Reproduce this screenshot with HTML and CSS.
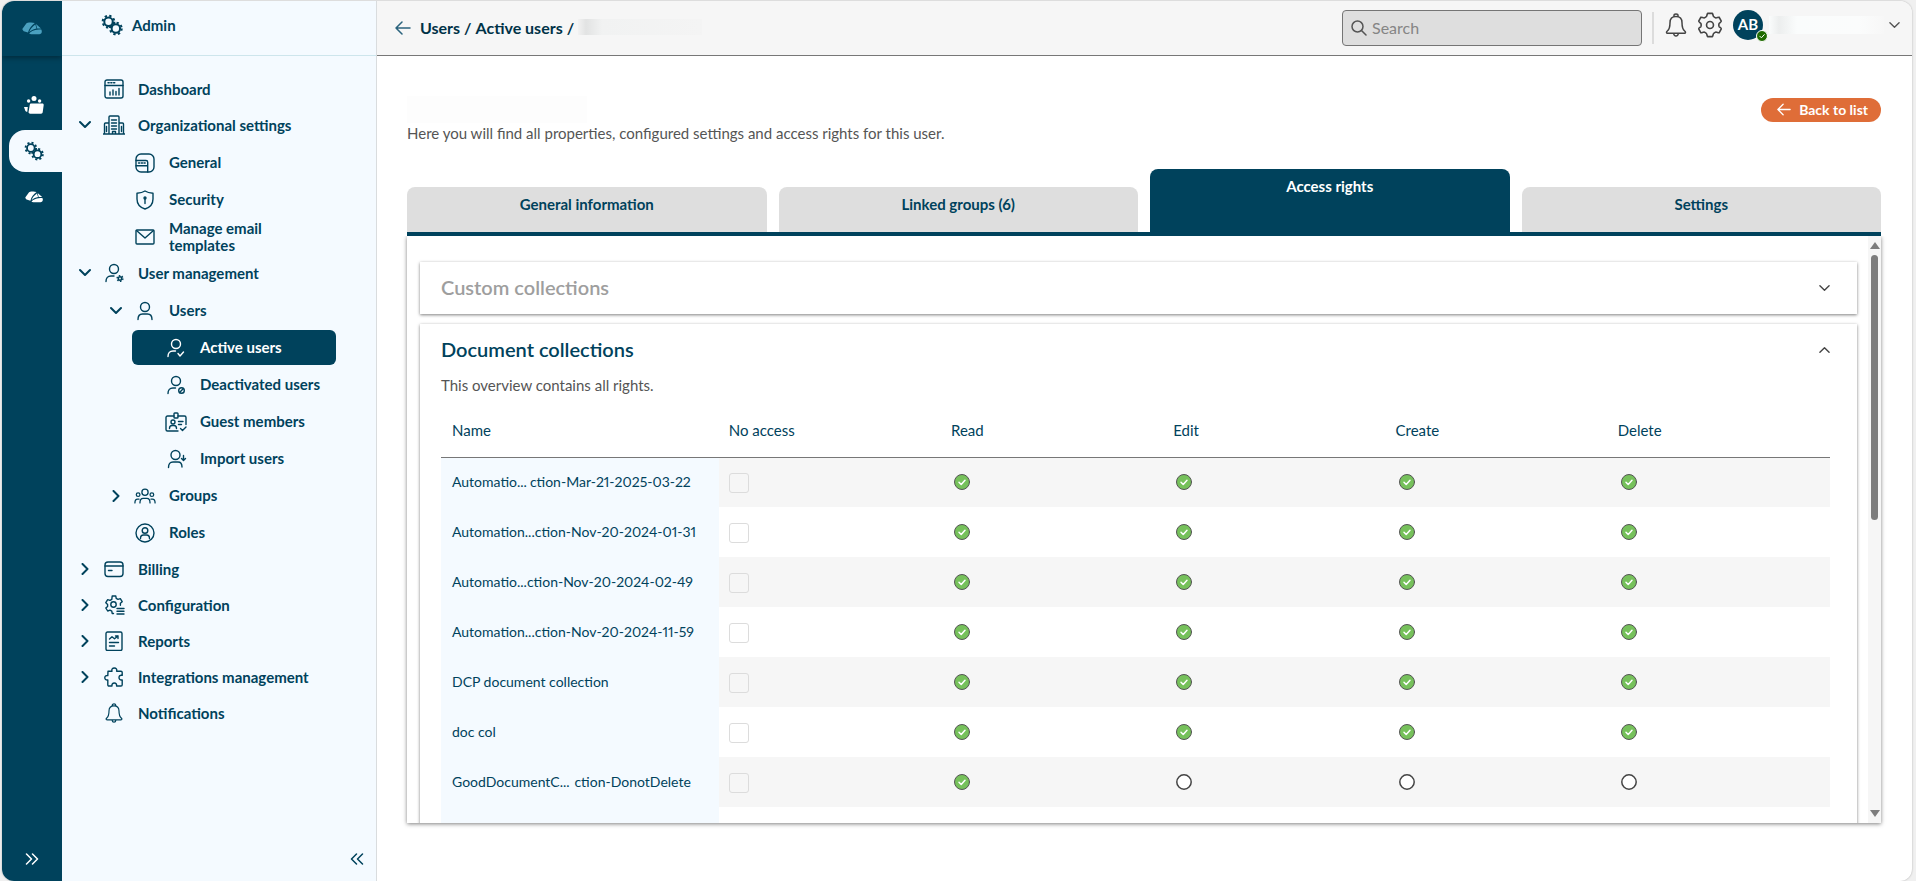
FILE: index.html
```html
<!DOCTYPE html>
<html lang="en">
<head>
  <meta charset="UTF-8">
  <meta name="viewport" content="width=device-width, initial-scale=1.0">
  <title>Admin - Active users</title>
  <link rel="stylesheet" href="styles.css">
</head>
<body>

<!-- icon sprite -->
<svg class="sprite" aria-hidden="true">
  <symbol id="logo" viewBox="0 0 20 13">
    <path d="M.3 7L4.300 1.500C5.200.6 7 .4 9 .5l3.800.5C9.500 3.400 7 6.500 6 10.600l-3.400-1C1.400 9.100.6 8.200.3 7z"/>
    <path d="M7.300 10C8.300 7.200 10.300 4.700 13.300 2.600l1.200 4C12 7 9.300 8.200 7.300 10z"/>
    <path d="M14 2.100l5 4.500-3.800-.1z"/>
    <path d="M7.200 11.500c2.400-2.600 5.700-3.800 12.100-3.900.6.900.7 1.900.4 2.900-.4 1.200-1.300 1.700-2.400 1.700H9.300c-.9 0-1.700-.2-2.100-.7z"/>
  </symbol>
  <symbol id="gears" viewBox="0 0 24 24">
    <g fill="none" stroke="currentColor">
      <circle cx="8.200" cy="8.400" r="4.600" stroke-width="2.200"/>
      <circle cx="8.200" cy="8.400" r="6.400" stroke-width="2.200" stroke-dasharray="2.500 2.530"/>
      <circle cx="16.200" cy="15.800" r="4.600" stroke-width="2.200"/>
      <circle cx="16.200" cy="15.800" r="6.400" stroke-width="2.200" stroke-dasharray="2.500 2.530"/>
    </g>
  </symbol>
  <symbol id="team" viewBox="0 0 20 18">
    <g fill="currentColor">
      <circle cx="10" cy="2.600" r="2.500"/><circle cx="4.600" cy="5" r="1.700"/><circle cx="15.600" cy="5" r="1.700"/>
      <path d="M5.800 8.700c.1-.8.700-1.200 1.500-1.200h11c1 0 1.500.6 1.400 1.500l-1 7.300c-.1.900-.7 1.400-1.600 1.400H6.200c-1 0-1.600-.5-1.700-1.400z"/>
      <path d="M0 11h3.800l-.5 4.800c-1.400 0-2-.6-2.200-1.500z"/>
    </g>
  </symbol>
  <symbol id="down" viewBox="0 0 12 12"><path d="M1 3l5 5 5-5"/></symbol>
  <symbol id="up" viewBox="0 0 12 12"><path d="M1 8l5-5 5 5"/></symbol>
  <symbol id="right" viewBox="0 0 12 12"><path d="M3.500 1l5 5-5 5"/></symbol>
  <symbol id="dbl-right" viewBox="0 0 14 12"><path d="M1.500 1l5 5-5 5M7.500 1l5 5-5 5"/></symbol>
  <symbol id="dbl-left" viewBox="0 0 14 12"><path d="M6.500 1l-5 5 5 5M12.500 1l-5 5 5 5"/></symbol>
  <symbol id="arrow" viewBox="0 0 16 14"><path d="M7 1L1 7l6 6M1 7h14"/></symbol>
  <symbol id="search" viewBox="0 0 16 16"><circle cx="6.500" cy="6.500" r="5.500"/><path d="M10.500 10.500L15 15"/></symbol>
  <symbol id="bell" viewBox="0 0 22 24">
    <path d="M9 3.500V2.300C9 1.500 9.900 1 11 1s2 .5 2 1.300v1.200M11 3.500c-3.800 0-6 2.600-6 6.200 0 4.300-.7 6.700-2.700 8.300-1.200 1-1 2.300.3 2.300h16.800c1.300 0 1.500-1.300.3-2.300-2-1.600-2.700-4-2.700-8.300 0-3.600-2.200-6.200-6-6.200zM8.700 20.500c.2 1.700 1 2.500 2.300 2.500s2.100-.8 2.300-2.500"/>
  </symbol>
  <symbol id="gear" viewBox="0 0 24 24">
    <path d="M9.800 1.300h4.400c.4 0 .7 2.500 1.100 2.900.5.500 1.500 1.100 2.200 1.300.6.100 2.500-1 2.900-.700l2 3.700c.3.600-1.700 1.500-2 2.100-.3.700-.3 2.100 0 2.800.3.600 2.300 1.500 2 2.100l-2 3.700c-.4.300-2.300-.8-2.900-.7-.7.200-1.700.8-2.200 1.300-.4.400-.7 2.900-1.100 2.900H9.800c-.4 0-.7-2.500-1.100-2.900-.5-.5-1.500-1.100-2.200-1.300-.6-.1-2.500 1-2.900.7l-2-3.700c-.3-.6 1.700-1.500 2-2.100.3-.7.300-2.100 0-2.800-.3-.6-2.300-1.500-2-2.100l2-3.700c.4-.3 2.300.8 2.900.7.700-.2 1.700-.8 2.200-1.300.4-.4.700-2.900 1.100-2.900z"/>
    <circle cx="12" cy="12" r="3.200"/>
  </symbol>
  <symbol id="dashboard" viewBox="0 0 20 20">
    <rect x="1" y="1" width="18" height="18" rx="2"/><path d="M1 6.500h18M4 3.800h1.200M6.800 3.800H8M9.600 3.800h1.200M6 16v-3M9 16v-5M12 16v-3.500M15 16V9.500"/>
  </symbol>
  <symbol id="building" viewBox="0 0 22 20">
    <path d="M0 19h22M6 19V2c0-.6.400-1 1-1h8c.6 0 1 .4 1 1v17M1.500 19V9c0-.6.400-1 1-1H6M20.500 19V9c0-.6-.4-1-1-1H16M8.500 5h5M8.500 8h5M8.500 11h5M8.500 14h5M3.500 11.500v5M18.500 11.500v5M9.500 19v-2.500h3V19"/>
  </symbol>
  <symbol id="general" viewBox="0 0 20 20">
    <rect x="1" y="1" width="18" height="18" rx="5"/><path d="M1 7.500h10c1 0 1.700.7 1.700 1.700V19M1 12.800h11.500M3.500 10h1.200M6.300 10h1.200M9 10h1.200"/>
  </symbol>
  <symbol id="shield" viewBox="0 0 20 20">
    <path d="M10 1C7.800 2.400 5 3 2 3.200V9c0 5 3.200 8.500 8 10 4.800-1.500 8-5 8-10V3.200C15 3 12.200 2.400 10 1z"/><circle cx="10" cy="8" r="1"/><path d="M10 8.500v5"/>
  </symbol>
  <symbol id="mail" viewBox="0 0 20 20">
    <rect x="1" y="3" width="18" height="14" rx="1"/><path d="M1.500 3.500L10 11l8.500-7.500"/>
  </symbol>
  <symbol id="user" viewBox="0 0 20 20">
    <circle cx="10" cy="6" r="4.500"/><path d="M3 18.500c0-3.500 1.500-5.500 4.500-5.500h5c3 0 4.500 2 4.500 5.500"/>
  </symbol>
  <symbol id="user-gear" viewBox="0 0 20 20">
    <circle cx="10" cy="6" r="4.500"/><path d="M2 18.500c0-3.700 1.800-5.500 5-5.500h3"/>
    <circle cx="16" cy="15.500" r="1.700" stroke-width="1.600"/><circle cx="16" cy="15.500" r="2.900" stroke-dasharray="1.500 1.530" stroke-width="1.400" stroke-linecap="butt"/>
  </symbol>
  <symbol id="user-check" viewBox="0 0 20 20">
    <circle cx="10" cy="6" r="4.500"/><path d="M2 18.500c0-3.700 1.800-5.500 5-5.500h2.500M12 15.500l2 2.500 3.500-4"/>
  </symbol>
  <symbol id="user-block" viewBox="0 0 20 20">
    <circle cx="10" cy="6" r="4.500"/><path d="M2 18.500c0-3.700 1.800-5.500 5-5.500h2.500"/><circle cx="15.500" cy="15.500" r="2.800"/><path d="M13.600 17.400l3.800-3.800"/>
  </symbol>
  <symbol id="badge" viewBox="0 0 22 20">
    <path d="M9 4H2.500C1.700 4 1 4.700 1 5.500v12c0 .8.700 1.500 1.500 1.500H13M13 4h6.500c.8 0 1.500.7 1.500 1.500v7"/><rect x="9" y="1" width="4" height="5" rx=".8"/>
    <circle cx="8" cy="10" r="2"/><path d="M4.500 16.500c0-2 1-3 2.500-3h2c1.500 0 2.500 1 2.500 3M13.500 9.500h4.500M13.500 12.500h3M15.500 16.500l2 2 3.500-3.500"/>
  </symbol>
  <symbol id="user-import" viewBox="0 0 20 20">
    <circle cx="9.500" cy="6" r="4.500"/><path d="M2.500 18.500c0-3.700 1.500-5.500 4.500-5.500h5c2.500 0 4 1.800 4 5M17.500 6.500V11M15.500 9.500l2 2 2-2"/>
  </symbol>
  <symbol id="groups" viewBox="0 0 24 20">
    <circle cx="12" cy="6" r="3.400"/><path d="M6.500 17.500c0-3.600 1.200-5 3.500-5h4c2.300 0 3.500 1.400 3.500 5"/>
    <circle cx="4.500" cy="8.500" r="2"/><circle cx="19.500" cy="8.500" r="2"/><path d="M1 17.500c0-2.800.8-4 3-4h1.500M23 17.500c0-2.800-.8-4-3-4h-1.500"/>
  </symbol>
  <symbol id="roles" viewBox="0 0 20 20">
    <circle cx="10" cy="10" r="9"/><circle cx="10" cy="7.500" r="2.800"/><path d="M5.500 15.500c0-2.500 1.200-3.500 3-3.500h3c1.800 0 3 1 3 3.500"/>
  </symbol>
  <symbol id="card" viewBox="0 0 20 20">
    <rect x="1" y="3" width="18" height="14.500" rx="3"/><path d="M1 7h18M4.500 11.500H8"/>
  </symbol>
  <symbol id="config" viewBox="0 0 20 20">
    <path d="M9.500 18.500H8.200l-.4-2.300-1.800-1-2.300.8-1.900-3 1.800-1.600v-2L1.800 7.700l1.900-3.100 2.300.8 1.800-1L8.200 1h3.600l.4 2.400 1.800 1 2.300-.8 1.900 3.100-1.800 1.600v1.900"/>
    <circle cx="9.500" cy="9.500" r="2.700"/><path d="M13 13.500h7M13 16.200h7M13 19h7"/>
  </symbol>
  <symbol id="report" viewBox="0 0 20 20">
    <rect x="2" y="1" width="16" height="18.500" rx="1.500"/><path d="M5.500 8L8 5.800l2.500 2L14 5M11.500 5H14v2.500M5.500 11.500h9M5.500 15h5"/>
  </symbol>
  <symbol id="puzzle" viewBox="0 0 20 20">
    <path d="M4 4.200h4C7.300 2.300 8.500 1 10.300 1s3 1.300 2.300 3.200H17c.7 0 1.200.5 1.200 1.200v3c-2-.6-3.200.6-3.200 2.200s1.200 2.900 3.200 2.300v4.900c0 .7-.5 1.200-1.200 1.200h-4.400c.3-1.900-.8-3-2.300-3s-2.700 1.100-2.300 3H5c-.7 0-1.200-.5-1.200-1.200V13C1.800 13.300.8 12.200.8 10.800s1-2.500 3-2.200z"/>
  </symbol>
</svg>

<div class="app">
  <aside class="rail">
    <a href="#" class="rail-logo" aria-label="Home"><svg class="fill" width="20" height="13"><use href="#logo"/></svg></a>
    <nav class="rail-menu">
      <a href="#" aria-label="Workspaces"><svg class="fill" width="20" height="18"><use href="#team"/></svg></a>
      <a href="#" class="current" aria-label="Admin"><svg width="20" height="20"><use href="#gears"/></svg></a>
      <a href="#" aria-label="Cloud"><svg class="fill" width="18" height="12"><use href="#logo"/></svg></a>
    </nav>
    <button type="button" class="rail-toggle" aria-label="Expand"><svg width="14" height="12"><use href="#dbl-right"/></svg></button>
  </aside>

  <aside class="sidebar">
    <div class="sidebar-title"><svg width="22" height="22"><use href="#gears"/></svg>Admin</div>
    <ul class="tree">
      <li><a href="#"><i></i><b><svg><use href="#dashboard"/></svg></b>Dashboard</a></li>
      <li>
        <a href="#"><i><svg><use href="#down"/></svg></i><b><svg><use href="#building"/></svg></b>Organizational settings</a>
        <ul>
          <li><a href="#"><i></i><b><svg><use href="#general"/></svg></b>General</a></li>
          <li><a href="#"><i></i><b><svg><use href="#shield"/></svg></b>Security</a></li>
          <li><a href="#"><i></i><b><svg><use href="#mail"/></svg></b>Manage email<br>templates</a></li>
        </ul>
      </li>
      <li>
        <a href="#"><i><svg><use href="#down"/></svg></i><b><svg><use href="#user-gear"/></svg></b>User management</a>
        <ul>
          <li>
            <a href="#"><i><svg><use href="#down"/></svg></i><b><svg><use href="#user"/></svg></b>Users</a>
            <ul>
              <li><a href="#" class="active"><i></i><b><svg><use href="#user-check"/></svg></b>Active users</a></li>
              <li><a href="#"><i></i><b><svg><use href="#user-block"/></svg></b>Deactivated users</a></li>
              <li><a href="#"><i></i><b><svg><use href="#badge"/></svg></b>Guest members</a></li>
              <li><a href="#"><i></i><b><svg><use href="#user-import"/></svg></b>Import users</a></li>
            </ul>
          </li>
          <li><a href="#"><i><svg><use href="#right"/></svg></i><b><svg><use href="#groups"/></svg></b>Groups</a></li>
          <li><a href="#"><i></i><b><svg><use href="#roles"/></svg></b>Roles</a></li>
        </ul>
      </li>
      <li><a href="#"><i><svg><use href="#right"/></svg></i><b><svg><use href="#card"/></svg></b>Billing</a></li>
      <li><a href="#"><i><svg><use href="#right"/></svg></i><b><svg><use href="#config"/></svg></b>Configuration</a></li>
      <li><a href="#"><i><svg><use href="#right"/></svg></i><b><svg><use href="#report"/></svg></b>Reports</a></li>
      <li><a href="#"><i><svg><use href="#right"/></svg></i><b><svg><use href="#puzzle"/></svg></b>Integrations management</a></li>
      <li><a href="#"><i></i><b><svg><use href="#bell"/></svg></b>Notifications</a></li>
    </ul>
    <button type="button" class="sidebar-toggle" aria-label="Collapse"><svg width="14" height="12"><use href="#dbl-left"/></svg></button>
  </aside>

  <main class="main">
    <header class="topbar">
      <a href="#" class="back-arrow" aria-label="Back"><svg width="16" height="14"><use href="#arrow"/></svg></a>
      <nav class="breadcrumb"><a href="#">Users</a> / <a href="#">Active users</a> /<span class="redacted crumb-name"></span></nav>
      <label class="search">
        <svg width="16" height="16"><use href="#search"/></svg>
        <input type="text" placeholder="Search" aria-label="Search">
      </label>
      <span class="divider"></span>
      <button type="button" class="icon-btn" aria-label="Notifications"><svg width="22" height="28"><use href="#bell"/></svg></button>
      <button type="button" class="icon-btn" aria-label="Settings"><svg width="26" height="28"><use href="#gear"/></svg></button>
      <button type="button" class="account" aria-label="Account">
        <span class="avatar">AB
          <svg class="status" viewBox="0 0 12 12"><circle cx="6" cy="6" r="5.500"/><path d="M3.800 6.200l1.600 1.600 2.900-3.200"/></svg>
        </span>
        <span class="redacted account-name"></span>
        <svg width="11" height="11"><use href="#down"/></svg>
      </button>
    </header>

    <section class="content">
      <div class="intro">
        <div>
          <div class="redacted user-name"></div>
          <p>Here you will find all properties, configured settings and access rights for this user.</p>
        </div>
        <button type="button" class="back-btn"><svg width="14" height="13"><use href="#arrow"/></svg>Back to list</button>
      </div>

      <div class="tabs" role="tablist">
        <button type="button" role="tab">General information</button>
        <button type="button" role="tab">Linked groups (6)</button>
        <button type="button" role="tab" class="selected" aria-selected="true">Access rights</button>
        <button type="button" role="tab">Settings</button>
      </div>

      <div class="panel">
        <div class="panel-body">
          <div class="card collapsed">
            <h2>Custom collections</h2>
            <button type="button" class="expander" aria-label="Expand"><svg width="11" height="11"><use href="#down"/></svg></button>
          </div>
          <div class="card">
            <h2>Document collections</h2>
            <button type="button" class="expander" aria-label="Collapse"><svg width="11" height="11"><use href="#up"/></svg></button>
            <p>This overview contains all rights.</p>
            <table class="rights">
              <thead>
                <tr><th>Name</th><th>No access</th><th>Read</th><th>Edit</th><th>Create</th><th>Delete</th></tr>
              </thead>
              <tbody id="rows"></tbody>
            </table>
          </div>
        </div>
        <div class="scroll">
          <svg width="10" height="7" viewBox="0 0 10 7"><path d="M5 0l5 7H0z"/></svg>
          <span class="thumb"></span>
          <svg width="10" height="7" viewBox="0 0 10 7"><path d="M5 7l5-7H0z"/></svg>
        </div>
      </div>
    </section>
  </main>
</div>

<script src="script.js"></script>
</body>
</html>
```

FILE: styles.css
```css
* {
  box-sizing: border-box;
}

body {
  margin: 0;
  padding: 1px 4px 0 2px;
  height: 100vh;
  overflow: hidden;
  background: #f0f0f0;
  font-family: Lato, "Liberation Sans", sans-serif;
  font-size: 15px;
  font-variant-numeric: proportional-nums;
  color: #555;
}

a {
  color: inherit;
  text-decoration: none;
}

button {
  border: 0;
  padding: 0;
  background: none;
  font: inherit;
  color: inherit;
  cursor: pointer;
}

svg {
  display: block;
  flex: none;
  fill: none;
  stroke: currentColor;
  stroke-width: 1.5;
  stroke-linecap: round;
  stroke-linejoin: round;
}

svg.fill {
  fill: currentColor;
  stroke: none;
}

.sprite {
  display: none;
}

.app {
  display: flex;
  height: 100%;
  background: #fff;
  border-radius: 12px;
  overflow: hidden;
  box-shadow: 0 0 2px rgba(0, 0, 0, 0.3);
}

/* left rail */
.rail {
  width: 60px;
  flex: none;
  display: flex;
  flex-direction: column;
  background: #00425c;
  color: #fff;
}

.rail-logo {
  height: 55px;
  display: flex;
  align-items: center;
  justify-content: center;
  color: #4aa0bf;
  box-shadow: 0 2px 5px rgba(0, 0, 0, 0.35);
}

.rail-menu {
  flex: 1;
  padding-top: 24px;
}

.rail-menu a {
  height: 50px;
  margin-left: 7px;
  padding-right: 4px;
  display: flex;
  align-items: center;
  justify-content: center;
}

.rail-menu svg,
.sidebar-title svg {
  stroke-linecap: butt;
}

.rail-menu .current {
  height: 42px;
  border-radius: 16px 0 0 16px;
  background: #f4faff;
  color: #00425c;
}

.rail-toggle,
.sidebar-toggle {
  height: 44px;
}

.rail-toggle svg,
.sidebar-toggle svg {
  margin: 0 auto;
}

/* sidebar */
.sidebar {
  width: 315px;
  flex: none;
  display: flex;
  flex-direction: column;
  background: #f4faff;
  border-right: 1px solid #d9dcde;
  color: #00425c;
  font-weight: bold;
}

.sidebar-title {
  height: 55px;
  padding: 0 0 6px 39px;
  display: flex;
  align-items: center;
  gap: 9px;
  border-bottom: 1px solid #cde5ec;
}

.tree {
  flex: 1;
  margin: 0;
  padding: 15px 40px 0 8px;
  list-style: none;
}

.tree ul {
  margin: 0 0 -1px;
  padding: 2px 0 0 31px;
  list-style: none;
}

.tree ul ul {
  margin: 0;
  padding-top: 0;
}

.tree a {
  display: flex;
  align-items: center;
  height: 36px;
  line-height: 17px;
  border-radius: 6px;
}

.tree ul a {
  height: 35px;
  margin-bottom: 2px;
}

.tree i {
  width: 30px;
}

.tree i svg {
  width: 12px;
  height: 12px;
  margin: 0 auto;
  stroke-width: 2;
}

.tree b {
  width: 28px;
  margin-right: 10px;
}

.tree b svg {
  width: 22px;
  height: 20px;
  margin: 0 auto;
  stroke-width: 1.4;
}

.tree .active {
  background: #00425c;
  color: #fff;
}

.sidebar-toggle {
  width: 38px;
  align-self: flex-end;
}

/* main column */
.main {
  flex: 1;
  min-width: 0;
  display: flex;
  flex-direction: column;
}

.topbar {
  height: 55px;
  flex: none;
  padding: 0 12px 0 18px;
  display: flex;
  align-items: center;
  background: #f6f6f6;
  border-bottom: 1px solid #777;
}

.back-arrow {
  color: #2b637d;
}

.breadcrumb {
  margin: 0 auto 0 9px;
  padding-bottom: 2px;
  display: flex;
  align-items: center;
  gap: 4px;
  font-size: 16px;
  font-weight: bold;
  color: #003247;
}

.redacted {
  display: block;
}

.crumb-name {
  width: 124px;
  height: 16px;
  background: linear-gradient(90deg, #f2f2f2, #e2e3e3 8px, #f1f2f2 24px, #f4f4f4);
}

.search {
  width: 300px;
  height: 36px;
  padding-left: 8px;
  display: flex;
  align-items: center;
  gap: 5px;
  background: #dedede;
  border: 1px solid #757575;
  border-radius: 4px;
}

.search svg {
  color: #555;
}

.search input {
  flex: 1;
  min-width: 0;
  padding: 0 0 2px;
  border: 0;
  outline: 0;
  background: none;
  font: inherit;
  font-size: 16px;
}

.search input::placeholder {
  color: #858585;
}

.divider {
  width: 2px;
  height: 32px;
  margin: 0 11px 0 10px;
  background: #dcdcdc;
}

.icon-btn {
  margin: 0 10px 6px 0;
  color: #444;
}

.account {
  display: flex;
  align-items: center;
  margin-bottom: 6px;
}

.avatar {
  position: relative;
  width: 30px;
  height: 30px;
  border-radius: 50%;
  background: #00425c;
  color: #fff;
  font-weight: bold;
  line-height: 28px;
}

.status {
  position: absolute;
  right: -5px;
  bottom: -2px;
  width: 12px;
  height: 12px;
  fill: #1f6b00;
  stroke: #fff;
  stroke-width: 1;
}

.status path {
  fill: none;
}

.account-name {
  width: 115px;
  height: 18px;
  margin: 0 5px 0 6px;
  background: linear-gradient(90deg, #fafcfc, #eceeee 10px, #fafcfc 28px, #fbfcfc 90px, #f7f7f7);
}

.content {
  flex: 1;
  min-height: 0;
  padding: 40px 31px 58px 30px;
  display: flex;
  flex-direction: column;
}

.intro {
  display: flex;
  justify-content: space-between;
  align-items: flex-start;
}

.intro p {
  margin: 0;
  line-height: 20px;
}

.user-name {
  width: 180px;
  height: 27px;
  background: #fdfdfd;
}

.back-btn {
  height: 24px;
  margin-top: 2px;
  padding: 0 13px 2px 16px;
  display: flex;
  align-items: center;
  gap: 8px;
  border-radius: 12px;
  background: #df6d38;
  color: #fff;
  font-size: 14px;
  font-weight: bold;
}

/* tabs */
.tabs {
  flex: none;
  margin-top: 26px;
  display: flex;
  align-items: flex-end;
  gap: 12px;
  border-bottom: 4px solid #00425c;
}

.tabs button {
  flex: 1;
  height: 45px;
  padding-bottom: 12px;
  border-radius: 8px 8px 0 0;
  background: #dedede;
  color: #00425c;
  font-weight: bold;
}

.tabs .selected {
  height: 63px;
  padding-bottom: 30px;
  background: #00425c;
  color: #fff;
}

.panel {
  flex: 1;
  min-height: 0;
  display: flex;
  box-shadow: 0 1px 4px rgba(0, 0, 0, 0.5);
  clip-path: inset(0 -6px -6px -6px);
}

.panel-body {
  flex: 1;
  overflow: hidden;
  padding: 26px 11px 0 13px;
}

.scroll {
  width: 13px;
  padding: 6px 0;
  display: flex;
  flex-direction: column;
  align-items: center;
  background: #f6f6f6;
}

.scroll svg {
  fill: #7d7d7d;
  stroke: none;
}

.thumb {
  width: 7px;
  height: 46%;
  margin: 6px 0 auto;
  border-radius: 4px;
  background: #7d7d7d;
}

/* collection cards */
.card {
  display: grid;
  grid-template-columns: 1fr auto;
  align-items: center;
  margin-bottom: 10px;
  padding: 0 27px 20px 21px;
  background: #fff;
  box-shadow: 0 1px 3px rgba(0, 0, 0, 0.5);
}

.card.collapsed {
  padding-bottom: 0;
}

.card h2 {
  margin: 0;
  padding-bottom: 2px;
  font-size: 20px;
  font-weight: 600;
  line-height: 50px;
  color: #00425c;
}

.card.collapsed h2 {
  color: #9e9e9e;
}

.card p {
  grid-column: 1 / 3;
  margin: 0;
  line-height: 18px;
}

.expander {
  color: #444;
}

/* rights table */
.rights {
  grid-column: 1 / 3;
  width: 100%;
  table-layout: fixed;
  border-collapse: collapse;
  color: #00425c;
}

.rights th {
  width: 16%;
  height: 63px;
  padding: 10px 10px 0;
  border-bottom: 1px solid #777;
  text-align: left;
  font-weight: normal;
}

.rights th:first-child {
  width: 20%;
  padding-left: 11px;
}

.rights td {
  height: 50px;
  padding: 0 10px;
}

.rights tbody tr:nth-child(odd) {
  background: #f6f6f6;
}

.rights td:first-child {
  padding: 0 28px 2px 11px;
  background: #f4faff;
  white-space: nowrap;
  font-size: 14px;
}

.long {
  display: flex;
  justify-content: space-between;
}

.rights input {
  appearance: none;
  display: block;
  width: 20px;
  height: 20px;
  margin: 2px 0 0;
  border: 1px solid #dcdcdc;
  border-radius: 3px;
}

.rights td svg {
  width: 16px;
  height: 16px;
  margin-left: 3px;
}

.granted circle {
  fill: #76c15b;
  stroke: #555;
  stroke-width: 1;
}

.granted path {
  stroke: #fff;
}

.denied circle {
  fill: #fff;
  stroke: #444;
}
```

FILE: script.js
```js
// name (start, end), rights: read, edit, create, delete
const collections = [
  ['Automatio...', 'ction-Mar-21-2025-03-22', 1, 1, 1, 1],
  ['Automation...', 'ction-Nov-20-2024-01-31', 1, 1, 1, 1],
  ['Automatio...', 'ction-Nov-20-2024-02-49', 1, 1, 1, 1],
  ['Automation...', 'ction-Nov-20-2024-11-59', 1, 1, 1, 1],
  ['DCP document collection', '', 1, 1, 1, 1],
  ['doc col', '', 1, 1, 1, 1],
  ['GoodDocumentC...', 'ction-DonotDelete', 1, 0, 0, 0],
  ['', '', 1, 0, 0, 0]
];

const granted = '<svg class="granted" viewBox="0 0 16 16"><circle cx="8" cy="8" r="7.500"/><path d="M5 8.300l2.200 2.200L11 6.300"/></svg>';
const denied = '<svg class="denied" viewBox="0 0 16 16"><circle cx="8" cy="8" r="7.200"/></svg>';

document.getElementById('rows').innerHTML = collections.map(([start, end, ...rights]) =>
  '<tr><td><div class="long"><span>' + start + '</span><span>' + end + '</span></div></td>' +
  '<td><input type="checkbox" aria-label="No access"></td>' +
  rights.map(r => '<td>' + (r ? granted : denied) + '</td>').join('') + '</tr>'
).join('');
```
